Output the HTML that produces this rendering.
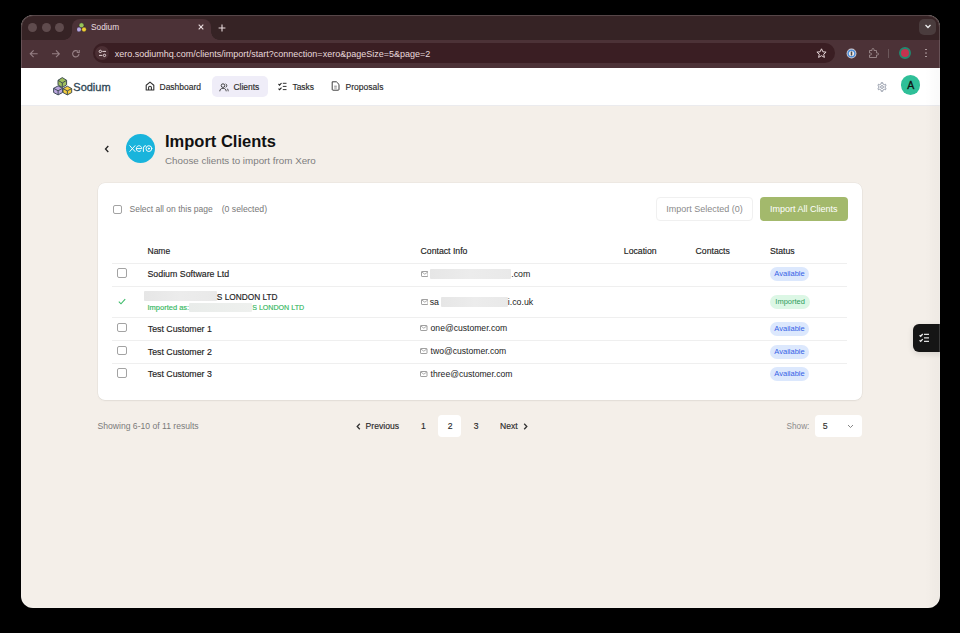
<!DOCTYPE html>
<html><head><meta charset="utf-8">
<style>
*{margin:0;padding:0;box-sizing:border-box}
html,body{width:960px;height:633px;overflow:hidden;background:#000;font-family:"Liberation Sans",sans-serif}
.a{position:absolute}
.t{position:absolute;white-space:nowrap;line-height:12px;height:12px}
#win{position:absolute;left:20.5px;top:14.5px;width:919.1px;height:593.3px;border-radius:12px;overflow:hidden;background:#f4efe9}
#bord{position:absolute;left:20.5px;top:14.5px;width:919.1px;height:593.3px;border-radius:12px;border:1.2px solid rgba(255,255,255,.16)}
#in{position:absolute;left:-0.5px;top:-0.5px;width:920px;height:594px}
#tabs{position:absolute;left:0;top:0;width:920px;height:25.5px;background:#362325}
#tool{position:absolute;left:0;top:25.5px;width:920px;height:28px;background:#4c3237}
.dot{position:absolute;top:9px;width:9px;height:9px;border-radius:50%;background:#5f4b4d}
#tab{position:absolute;left:52px;top:4.5px;width:139px;height:21px;background:#4c3237;border-radius:8px 8px 0 0}
#addr{position:absolute;left:72.6px;top:29px;width:742.5px;height:20.3px;border-radius:10px;background:#3a1e23}
#nav{position:absolute;left:0;top:53.5px;width:920px;height:38.5px;background:#fff;border-bottom:1px solid #ebebee}
.med{-webkit-text-stroke:0.15px currentColor}
#card{position:absolute;left:78px;top:169px;width:764px;height:216.5px;background:#fff;border-radius:7px;box-shadow:0 0 0 0.5px rgba(0,0,0,.06),0 1px 2px rgba(0,0,0,.05)}
.cb{position:absolute;width:9.5px;height:9.5px;border:1.1px solid #a3a3a3;border-radius:2px;background:#fff}
.line{position:absolute;left:14px;width:735.3px;height:1px;background:#efefef}
.badge{position:absolute;height:14px;border-radius:7px;font-size:7.5px;line-height:14px;text-align:center}
.av{background:#dce8fd;color:#3562e6}
.im{background:#dcf7e5;color:#2f9c5b}
.blur{position:absolute;background:linear-gradient(90deg,#e6e6e6,#ececec 50%,#e9e9e9);border-radius:1px}
</style></head><body>
<div id="win"><div id="in">
  <div id="tabs">
    <div class="dot" style="left:8px"></div>
    <div class="dot" style="left:21.5px"></div>
    <div class="dot" style="left:35px"></div>
    <div id="tab"></div><div class="a" style="left:44px;top:17.5px;width:8px;height:8px;background:radial-gradient(circle at 0 0,transparent 7.5px,#4c3237 8px)"></div><div class="a" style="left:191px;top:17.5px;width:8px;height:8px;background:radial-gradient(circle at 100% 0,transparent 7.5px,#4c3237 8px)"></div>
    <!-- favicon -->
    <svg class="a" style="left:57px;top:8px" width="10" height="10" viewBox="0 0 10 10"><g stroke="#2a2030" stroke-width="0.5"><circle cx="4.5" cy="3.3" r="2.5" fill="#98c45a"/><circle cx="2" cy="7.5" r="2.4" fill="#b8a8e0"/><circle cx="7" cy="7.5" r="2.4" fill="#f0cc30"/></g></svg>
    <div class="t" style="left:71px;top:7.2px;font-size:8.3px;color:#eadfe0">Sodium</div>
    <svg class="a" style="left:176.8px;top:9.3px" width="8" height="8" viewBox="0 0 8 8"><path d="M1.7 1.7L6.3 6.3M6.3 1.7L1.7 6.3" stroke="#eadcde" stroke-width="1.15"/></svg>
    <svg class="a" style="left:198.3px;top:9.5px" width="8" height="8" viewBox="0 0 8 8"><path d="M4 0.6V7.4M0.6 4H7.4" stroke="#eadcde" stroke-width="1.1"/></svg>
    <div class="a" style="left:899.3px;top:4.7px;width:16.3px;height:16px;border-radius:5px;background:#4a3c3d"></div>
    <svg class="a" style="left:903.5px;top:9.3px" width="8" height="7" viewBox="0 0 8 7"><path d="M1.5 2 L4 4.5 L6.5 2" stroke="#eee" stroke-width="1.3" fill="none"/></svg>
  </div>
  <div id="tool">
    <svg class="a" style="left:9.3px;top:9.1px" width="9.6" height="9.6" viewBox="0 0 10 10"><path d="M9 5H1.5M4.8 1.5L1.3 5l3.5 3.5" stroke="#957f84" stroke-width="1.2" fill="none"/></svg>
    <svg class="a" style="left:30.6px;top:9.1px" width="9.6" height="9.6" viewBox="0 0 10 10"><path d="M1 5h7.5M5.2 1.5L8.7 5 5.2 8.5" stroke="#957f84" stroke-width="1.2" fill="none"/></svg>
    <svg class="a" style="left:51.3px;top:9.1px" width="9.6" height="9.6" viewBox="0 0 10 10"><path d="M8.3 5a3.3 3.3 0 1 1-1-2.4" stroke="#957f84" stroke-width="1.2" fill="none"/><path d="M8.6 1v2.6H6" stroke="#957f84" stroke-width="1.2" fill="none"/></svg>
  </div>
  <div id="addr">
    <div class="a" style="left:2.8px;top:3.2px;width:14px;height:14px;border-radius:50%;background:#4c2f34"></div>
    <svg class="a" style="left:5.5px;top:5.8px" width="9" height="9" viewBox="0 0 9 9"><path d="M4.3 2.4h3.7M1 6.4h3.3" stroke="#e3d3d5" stroke-width="1"/><circle cx="2.3" cy="2.4" r="1.2" stroke="#e3d3d5" stroke-width="1" fill="none"/><circle cx="6.5" cy="6.4" r="1.2" stroke="#e3d3d5" stroke-width="1" fill="none"/></svg>
    <div class="t" style="left:22.2px;top:4.6px;font-size:9px;color:#e9dadc">xero.sodiumhq.com/clients/import/start?connection=xero&amp;pageSize=5&amp;page=2</div>
    <svg class="a" style="left:723px;top:5px" width="11" height="11" viewBox="0 0 11 11"><path d="M5.5 0.8l1.4 3 3.2.3-2.4 2.1.7 3.2-2.9-1.7-2.9 1.7.7-3.2L0.9 4.1l3.2-.3z" stroke="#e6d6d8" stroke-width="1" fill="none" stroke-linejoin="round"/></svg>
  </div>
  <!-- toolbar right icons -->
  <svg class="a" style="left:825.6px;top:33.6px" width="11" height="11" viewBox="0 0 11 11"><circle cx="5.5" cy="5.5" r="4.9" fill="#d9cfd0"/><circle cx="5.5" cy="5.5" r="4.1" fill="#4f8ed8"/><circle cx="5.5" cy="5.5" r="2.6" fill="#f2eeee"/><rect x="4.7" y="3.6" width="1.6" height="3.8" rx="0.5" fill="#4a4a4a"/></svg>
  <svg class="a" style="left:847.5px;top:33.5px" width="11" height="11" viewBox="0 0 11 11"><path d="M1.5 2.5h2.5v-1a1 1 0 0 1 2 0v1h2.5v2.5h1a1 1 0 0 1 0 2h-1v2.5h-7v-2.5h1a1 1 0 0 0 0-2h-1z" stroke="#9c8a8d" stroke-width="0.9" fill="none"/></svg>
  <div class="a" style="left:868.2px;top:35px;width:1px;height:9px;background:#6c585b"></div>
  <div class="a" style="left:879px;top:33.2px;width:11.8px;height:11.8px;border-radius:50%;background:#c4334f;border:2.1px solid #22876f"></div>
  <div class="a" style="left:905.3px;top:34.5px;width:1.6px;height:1.6px;border-radius:50%;background:#b9a8aa;box-shadow:0 3.5px 0 #b9a8aa,0 7px 0 #b9a8aa"></div>

  <!-- nav -->
  <div id="nav">
    <svg class="a" style="left:33px;top:9.5px" width="20" height="19" viewBox="0 0 20 19"><g stroke="#3a4852" stroke-width="0.95" stroke-linejoin="round"><path d="M9.30 0.60L13.60 3.27V7.83L9.30 10.50L5.00 7.83V3.27Z" fill="#9fbf5c"/><path d="M5.00 3.27L9.30 5.95L13.60 3.27M9.30 5.95V10.50" fill="none"/><path d="M5.10 8.90L9.60 11.33V15.47L5.10 17.90L0.60 15.47V11.33Z" fill="#b9a5dd"/><path d="M0.60 11.33L5.10 13.76L9.60 11.33M5.10 13.76V17.90" fill="none"/><path d="M14.35 9.20L18.70 11.55V15.55L14.35 17.90L10.00 15.55V11.55Z" fill="#f5cd3c"/><path d="M10.00 11.55L14.35 13.90L18.70 11.55M14.35 13.90V17.90" fill="none"/></g></svg>
    <div class="t med" style="left:53.3px;top:12.6px;font-size:11px;line-height:14px;height:14px;color:#2d4654;-webkit-text-stroke:0.3px #2d4654">Sodium</div>

    <svg class="a" style="left:124.5px;top:13.3px" width="10" height="10" viewBox="0 0 10 10"><path d="M1.2 9V4.2L5 1.1 8.8 4.2V9zM3.6 9V6.6a1.4 1.4 0 0 1 2.8 0V9" stroke="#333" stroke-width="1.1" fill="none" stroke-linejoin="round"/></svg>
    <div class="t med" style="left:139.5px;top:13px;font-size:8.5px;color:#2a2a2a">Dashboard</div>

    <div class="a" style="left:192px;top:8.5px;width:55.6px;height:21px;border-radius:5px;background:#efedf8"></div>
    <svg class="a" style="left:198.8px;top:15px" width="10" height="9" viewBox="0 0 10 9"><circle cx="4" cy="2.6" r="1.8" stroke="#333" stroke-width="0.9" fill="none"/><path d="M0.8 8.3c0-2 1.4-3 3.2-3s3.2 1 3.2 3M6.6 0.9a1.8 1.8 0 0 1 0 3.4M8 5.6c.8.4 1.2 1.3 1.2 2.7" stroke="#333" stroke-width="0.9" fill="none"/></svg>
    <div class="t med" style="left:213.4px;top:13px;font-size:8.5px;color:#2a2a2a">Clients</div>

    <svg class="a" style="left:258px;top:14.3px" width="9" height="9" viewBox="0 0 9 9"><path d="M0.5 2l1.1 1.1 1.9-2.1M0.5 6.6l1.1 1.1 1.9-2.1" stroke="#222" stroke-width="1.1" fill="none"/><path d="M4.8 1.3h3.7M4.8 4.4h3.7M4.8 7.6h3.7" stroke="#333" stroke-width="1"/></svg>
    <div class="t med" style="left:272.4px;top:13px;font-size:8.5px;color:#2a2a2a">Tasks</div>

    <svg class="a" style="left:311px;top:13.2px" width="9" height="10" viewBox="0 0 9 10"><path d="M1.2 0.8h4.2L8 3.4v5a0.8 0.8 0 0 1-0.8 0.8H2a0.8 0.8 0 0 1-0.8-0.8z" stroke="#333" stroke-width="0.95" fill="none" stroke-linejoin="round"/><path d="M3.2 5.2h2.6M3.2 7h2.6" stroke="#555" stroke-width="0.7"/></svg>
    <div class="t med" style="left:325.6px;top:13px;font-size:8.5px;color:#2a2a2a">Proposals</div>

    <svg class="a" style="left:857px;top:14.5px" width="10" height="10" viewBox="0 0 10 10"><path d="M4.20 1.80 L4.31 0.65 L5.69 0.65 L5.80 1.80 L7.37 2.71 L8.42 2.23 L9.11 3.42 L8.17 4.09 L8.17 5.91 L9.11 6.58 L8.42 7.77 L7.37 7.29 L5.80 8.20 L5.69 9.35 L4.31 9.35 L4.20 8.20 L2.63 7.29 L1.58 7.77 L0.89 6.58 L1.83 5.91 L1.83 4.09 L0.89 3.42 L1.58 2.23 L2.63 2.71Z" stroke="#8c93a3" stroke-width="0.9" fill="none" stroke-linejoin="round"/><circle cx="5" cy="5" r="1.4" stroke="#8c93a3" stroke-width="0.9" fill="none"/></svg>
    <div class="a" style="left:880.9px;top:7.5px;width:19.6px;height:19.6px;border-radius:50%;background:#2fbf98"></div>
    <div class="t" style="left:880.9px;top:10.3px;width:19.6px;height:14px;line-height:14px;text-align:center;font-size:10.5px;color:#111;-webkit-text-stroke:0.3px #111">A</div>
  </div>

  <!-- title -->
  <svg class="a" style="left:84px;top:131px" width="6" height="8" viewBox="0 0 6 8"><path d="M4.3 1 L1.5 4 L4.3 7" stroke="#222" stroke-width="1.3" fill="none"/></svg>
  <div class="a" style="left:106px;top:120.2px;width:29px;height:29px;border-radius:50%;background:#19b4dc"></div>
  <svg class="a" style="left:106px;top:124px" width="30" height="20" viewBox="126 138 30 20"><g stroke="#fff" stroke-width="0.95" fill="none" stroke-linecap="round"><path d="M129.8 145.7L135 151.5M135 145.7L129.8 151.5"/><path d="M136.6 148.6h5.1a2.7 2.9 0 1 0-0.8 2.1"/><path d="M143.4 151.5v-3.4a2.3 2.3 0 0 1 2.2-2.4"/><circle cx="148.9" cy="148.6" r="2.9"/><circle cx="148.9" cy="148.6" r="0.6" fill="#fff"/></g></svg>
  <div class="t" style="left:145px;top:116.5px;font-size:16.5px;line-height:20px;height:20px;font-weight:bold;color:#111">Import Clients</div>
  <div class="t" style="left:145px;top:140.7px;font-size:9.8px;color:#7e7e7e">Choose clients to import from Xero</div>

  <!-- card -->
  <div id="card">
    <div class="cb" style="left:14.5px;top:21.5px"></div>
    <div class="t" style="left:31.5px;top:19.8px;font-size:8.5px;color:#777">Select all on this page</div>
    <div class="t" style="left:123.7px;top:19.8px;font-size:8.7px;color:#777">(0 selected)</div>

    <div class="a" style="left:558px;top:14px;width:97px;height:23.5px;border:1px solid #f0f0f0;border-radius:4px"></div>
    <div class="t" style="left:558px;top:20px;width:97px;text-align:center;font-size:9px;color:#8a8a8a">Import Selected (0)</div>
    <div class="a" style="left:662px;top:14px;width:87.5px;height:24px;border-radius:4px;background:#a3b96c"></div>
    <div class="t" style="left:662px;top:20.2px;width:87.5px;text-align:center;font-size:9px;color:#fff">Import All Clients</div>

    <div class="t med" style="left:49.5px;top:62.2px;font-size:8.5px;color:#222">Name</div>
    <div class="t med" style="left:322.6px;top:62.2px;font-size:8.7px;color:#222">Contact Info</div>
    <div class="t med" style="left:525.8px;top:62.2px;font-size:8.7px;color:#222">Location</div>
    <div class="t med" style="left:597.6px;top:62.2px;font-size:8.7px;color:#222">Contacts</div>
    <div class="t med" style="left:672px;top:62.2px;font-size:8.7px;color:#222">Status</div>

    <div class="line" style="top:79.5px"></div>
    <div class="line" style="top:102.8px"></div>
    <div class="line" style="top:133.5px"></div>
    <div class="line" style="top:156.6px"></div>
    <div class="line" style="top:179.6px"></div>

    <!-- row1 -->
    <div class="cb" style="left:19.3px;top:85.3px"></div>
    <div class="t med" style="left:49.5px;top:85px;font-size:8.8px;color:#222">Sodium Software Ltd</div>
    <svg class="a" style="left:322.6px;top:87.5px" width="7.5" height="6" viewBox="0 0 7.5 6"><rect x="0.5" y="0.5" width="6.5" height="5" rx="0.6" stroke="#888" stroke-width="0.8" fill="none"/><path d="M0.8 1l3 2.2 3-2.2" stroke="#888" stroke-width="0.7" fill="none"/></svg>
    <div class="blur" style="left:331.7px;top:86px;width:81.5px;height:10px"></div>
    <div class="t" style="left:413.2px;top:85px;font-size:8.8px;color:#222">.com</div>
    <div class="badge av" style="left:672px;top:84.2px;width:39px">Available</div>

    <!-- row2 -->
    <svg class="a" style="left:20px;top:114.5px" width="8" height="7" viewBox="0 0 8 7"><path d="M0.8 3.6 L3 5.8 L7.2 1.2" stroke="#3dbb6a" stroke-width="1.1" fill="none"/></svg>
    <div class="blur" style="left:46.4px;top:108px;width:72.4px;height:10px"></div>
    <div class="t med" style="left:118.8px;top:107.8px;font-size:8.3px;color:#222">S LONDON LTD</div>
    <div class="t med" style="left:49.5px;top:118.7px;font-size:7.5px;color:#36b862">Imported as:</div>
    <div class="blur" style="left:91.2px;top:119.8px;width:63px;height:9.2px;background:linear-gradient(90deg,#e9ecea,#eef0ee)"></div>
    <div class="t med" style="left:154.2px;top:118.7px;font-size:7.1px;color:#36b862">S LONDON LTD</div>
    <svg class="a" style="left:322.6px;top:116.3px" width="7.5" height="6" viewBox="0 0 7.5 6"><rect x="0.5" y="0.5" width="6.5" height="5" rx="0.6" stroke="#888" stroke-width="0.8" fill="none"/><path d="M0.8 1l3 2.2 3-2.2" stroke="#888" stroke-width="0.7" fill="none"/></svg>
    <div class="t" style="left:331.7px;top:112.5px;font-size:8.8px;color:#222">sa</div>
    <div class="blur" style="left:342.7px;top:113.5px;width:67px;height:10px"></div>
    <div class="t" style="left:409.8px;top:112.5px;font-size:8.8px;color:#222">i.co.uk</div>
    <div class="badge im" style="left:672px;top:112px;width:40.3px">Imported</div>

    <!-- row3 -->
    <div class="cb" style="left:19.3px;top:139.5px"></div>
    <div class="t med" style="left:49.8px;top:139.7px;font-size:8.8px;color:#222">Test Customer 1</div>
    <svg class="a" style="left:322px;top:142px" width="7.5" height="6" viewBox="0 0 7.5 6"><rect x="0.5" y="0.5" width="6.5" height="5" rx="0.6" stroke="#888" stroke-width="0.8" fill="none"/><path d="M0.8 1l3 2.2 3-2.2" stroke="#888" stroke-width="0.7" fill="none"/></svg>
    <div class="t" style="left:332.6px;top:139.2px;font-size:8.6px;color:#222">one@customer.com</div>
    <div class="badge av" style="left:672px;top:138.5px;width:39px">Available</div>

    <!-- row4 -->
    <div class="cb" style="left:19.3px;top:162.5px"></div>
    <div class="t med" style="left:49.8px;top:162.7px;font-size:8.8px;color:#222">Test Customer 2</div>
    <svg class="a" style="left:322px;top:165px" width="7.5" height="6" viewBox="0 0 7.5 6"><rect x="0.5" y="0.5" width="6.5" height="5" rx="0.6" stroke="#888" stroke-width="0.8" fill="none"/><path d="M0.8 1l3 2.2 3-2.2" stroke="#888" stroke-width="0.7" fill="none"/></svg>
    <div class="t" style="left:332.6px;top:162.2px;font-size:8.6px;color:#222">two@customer.com</div>
    <div class="badge av" style="left:672px;top:161.5px;width:39px">Available</div>

    <!-- row5 -->
    <div class="cb" style="left:19.3px;top:185px"></div>
    <div class="t med" style="left:49.8px;top:185.2px;font-size:8.8px;color:#222">Test Customer 3</div>
    <svg class="a" style="left:322px;top:187.5px" width="7.5" height="6" viewBox="0 0 7.5 6"><rect x="0.5" y="0.5" width="6.5" height="5" rx="0.6" stroke="#888" stroke-width="0.8" fill="none"/><path d="M0.8 1l3 2.2 3-2.2" stroke="#888" stroke-width="0.7" fill="none"/></svg>
    <div class="t" style="left:332.6px;top:184.7px;font-size:8.6px;color:#222">three@customer.com</div>
    <div class="badge av" style="left:672px;top:184px;width:39px">Available</div>
  </div>

  <!-- pagination -->
  <div class="t" style="left:77.5px;top:406px;font-size:8.6px;color:#7a7a7a">Showing 6-10 of 11 results</div>
  <svg class="a" style="left:335.5px;top:408.5px" width="5" height="7" viewBox="0 0 5 7"><path d="M3.8 0.8 L1.2 3.5 L3.8 6.2" stroke="#333" stroke-width="1.3" fill="none"/></svg>
  <div class="t med" style="left:345.6px;top:406px;font-size:8.6px;color:#2a2a2a">Previous</div>
  <div class="t med" style="left:401px;top:406px;font-size:8.6px;color:#2a2a2a">1</div>
  <div class="a" style="left:418px;top:401px;width:23px;height:22.3px;border-radius:4px;background:#fff"></div>
  <div class="t med" style="left:427.8px;top:406px;font-size:8.6px;color:#2a2a2a">2</div>
  <div class="t med" style="left:453.8px;top:406px;font-size:8.6px;color:#2a2a2a">3</div>
  <div class="t med" style="left:480px;top:406px;font-size:8.6px;color:#2a2a2a">Next</div>
  <svg class="a" style="left:502.5px;top:408.5px" width="5" height="7" viewBox="0 0 5 7"><path d="M1.2 0.8 L3.8 3.5 L1.2 6.2" stroke="#333" stroke-width="1.3" fill="none"/></svg>

  <div class="t" style="left:766.6px;top:406.8px;font-size:8.2px;color:#8a8a8a">Show:</div>
  <div class="a" style="left:795px;top:401px;width:46.6px;height:22.3px;border-radius:4px;background:#fff"></div>
  <div class="t med" style="left:802.7px;top:406px;font-size:8.8px;color:#333">5</div>
  <svg class="a" style="left:826.5px;top:410px" width="7" height="5" viewBox="0 0 7 5"><path d="M1 1 L3.5 3.5 L6 1" stroke="#777" stroke-width="0.9" fill="none"/></svg>

  <div class="a" style="left:905px;top:53.5px;width:15px;height:540px;background:linear-gradient(90deg,rgba(0,0,0,0),rgba(0,0,0,.025))"></div>
  <!-- floating side button -->
  <div class="a" style="left:893.2px;top:309.8px;width:40px;height:28px;border-radius:6px;background:#151515;box-shadow:0 2px 6px rgba(0,0,0,.12)"></div>
  <svg class="a" style="left:898.5px;top:318.5px" width="11" height="10" viewBox="0 0 11 10"><path d="M0.6 2.2l1.1 1.1 2-2.3M0.6 7.3l1.1 1.1 2-2.3" stroke="#eee" stroke-width="1.3" fill="none"/><path d="M5 1.3h5M5 4.8h5M5 8.3h5" stroke="#ddd" stroke-width="1.2"/></svg>
</div></div>
<div id="bord"></div>
</body></html>
